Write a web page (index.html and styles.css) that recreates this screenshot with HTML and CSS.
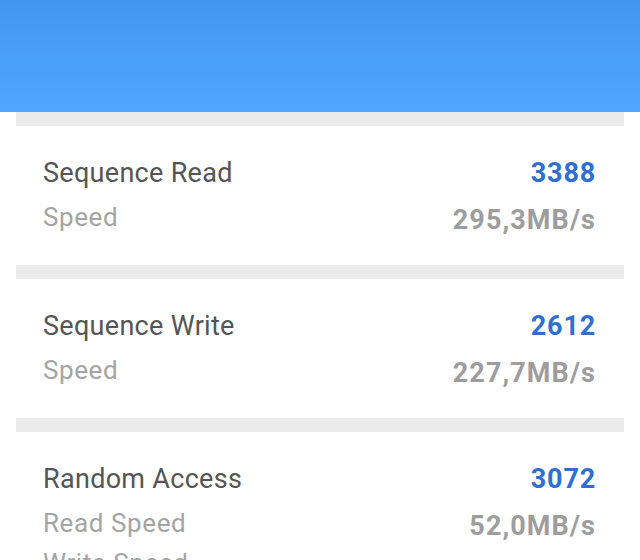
FILE: index.html
```html
<!DOCTYPE html>
<html>
<head>
<meta charset="utf-8">
<link rel="stylesheet" href="styles.css">
</head>
<body>
<div class="header"></div>
<div class="list">
  <div class="sep"></div>
  <div class="card">
    <div class="labels">
      <div class="title">Sequence Read</div>
      <div class="sub">Speed</div>
    </div>
    <div class="values">
      <div class="score">3388</div>
      <div class="speed">295,3MB/s</div>
    </div>
  </div>
  <div class="sep"></div>
  <div class="card">
    <div class="labels">
      <div class="title">Sequence Write</div>
      <div class="sub">Speed</div>
    </div>
    <div class="values">
      <div class="score">2612</div>
      <div class="speed">227,7MB/s</div>
    </div>
  </div>
  <div class="sep"></div>
  <div class="card">
    <div class="labels">
      <div class="title">Random Access</div>
      <div class="sub">Read Speed</div>
      <div class="sub">Write Speed</div>
    </div>
    <div class="values">
      <div class="score">3072</div>
      <div class="speed">52,0MB/s</div>
    </div>
  </div>
</div>
</body>
</html>
```
FILE: styles.css
```css
html, body {
  margin: 0;
  padding: 0;
  background: #ffffff;
  height: 560px;
  overflow: hidden;
}
body {
  font-family: Roboto, "Liberation Sans", sans-serif;
}
.header {
  height: 112px;
  background: linear-gradient(to bottom, #4496f1, #4fa7fd);
}
.list {
  padding: 0 16px;
}
.sep {
  height: 14px;
  background: #ebebeb;
}
.card {
  display: flex;
  justify-content: space-between;
  padding: 23px 28px 22px 27px;
  background: #ffffff;
}
.labels, .values {
  display: flex;
  flex-direction: column;
}
.values {
  align-items: flex-end;
}
.title {
  font-size: 27px;
  line-height: 48px;
  color: #555555;
  letter-spacing: 0.3px;
}
.sub {
  font-size: 26px;
  line-height: 40px;
  color: #a4a4a4;
  letter-spacing: 0.6px;
}
.score {
  font-size: 27px;
  line-height: 48px;
  font-weight: 700;
  color: #2f6fd3;
  letter-spacing: 0.8px;
}
.speed {
  font-size: 27px;
  line-height: 46px;
  font-weight: 700;
  color: #9d9d9d;
  letter-spacing: 1.1px;
}
```
